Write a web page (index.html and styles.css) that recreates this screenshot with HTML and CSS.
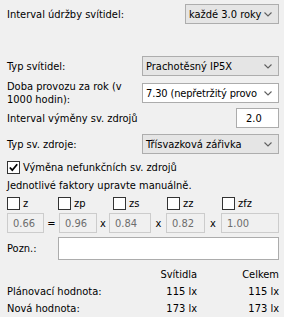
FILE: index.html
```html
<!DOCTYPE html>
<html lang="cs">
<head>
<meta charset="utf-8">
<link rel="stylesheet" href="styles.css">
</head>
<body>
<div class="panel">
  <div class="row r1">
    <span class="label">Interval údržby svítidel:</span>
    <div class="combo gray w-small"><span>každé 3.0 roky</span><svg class="chev" width="8" height="5" viewBox="0 0 8 5"><polyline points="0.5,0.5 4,4 7.5,0.5" fill="none" stroke="#606060" stroke-width="1.1"/></svg></div>
  </div>
  <div class="row r2">
    <span class="label">Typ svítidel:</span>
    <div class="combo gray w-big"><span>Prachotěsný IP5X</span><svg class="chev" width="8" height="5" viewBox="0 0 8 5"><polyline points="0.5,0.5 4,4 7.5,0.5" fill="none" stroke="#606060" stroke-width="1.1"/></svg></div>
  </div>
  <div class="row r3">
    <span class="label two">Doba provozu za rok (v<br>1000 hodin):</span>
    <div class="combo white w-big"><span class="clip">7.30 (nepřetržitý provo</span><svg class="chev" width="8" height="5" viewBox="0 0 8 5"><polyline points="0.5,0.5 4,4 7.5,0.5" fill="none" stroke="#606060" stroke-width="1.1"/></svg></div>
  </div>
  <div class="row r4">
    <span class="label">Interval výměny sv. zdrojů</span>
    <div class="field w-num">2.0</div>
  </div>
  <div class="row r5">
    <span class="label">Typ sv. zdroje:</span>
    <div class="combo gray w-big"><span>Třísvazková zářivka</span><svg class="chev" width="8" height="5" viewBox="0 0 8 5"><polyline points="0.5,0.5 4,4 7.5,0.5" fill="none" stroke="#606060" stroke-width="1.1"/></svg></div>
  </div>
  <div class="row r6">
    <span class="check"><svg width="11" height="11" viewBox="0 0 11 11"><polyline points="1.8,5.5 4.3,8.2 9.2,2.2" fill="none" stroke="#000" stroke-width="1.8"/></svg></span>
    <span class="check-label">Výměna nefunkčních sv. zdrojů</span>
  </div>
  <div class="row r7">
    <span class="label">Jednotlivé faktory upravte manuálně.</span>
  </div>
  <div class="row r8">
    <span class="cb c1"><span class="check"></span><span class="check-label">z</span></span>
    <span class="cb c2"><span class="check"></span><span class="check-label">zp</span></span>
    <span class="cb c3"><span class="check"></span><span class="check-label">zs</span></span>
    <span class="cb c4"><span class="check"></span><span class="check-label">zz</span></span>
    <span class="cb c5"><span class="check"></span><span class="check-label">zfz</span></span>
  </div>
  <div class="row r9">
    <div class="dis d1">0.66</div>
    <span class="op o1">=</span>
    <div class="dis d2">0.96</div>
    <span class="op o2">x</span>
    <div class="dis d3">0.84</div>
    <span class="op o3">x</span>
    <div class="dis d4">0.82</div>
    <span class="op o4">x</span>
    <div class="dis d5">1.00</div>
  </div>
  <div class="row r10">
    <span class="label pozn">Pozn.:</span>
    <div class="field note"></div>
  </div>
  <div class="table">
    <span></span><span class="num">Svítidla</span><span class="num">Celkem</span>
    <span>Plánovací hodnota:</span><span class="num">115 lx</span><span class="num">115 lx</span>
    <span>Nová hodnota:</span><span class="num">173 lx</span><span class="num">173 lx</span>
  </div>
</div>
</body>
</html>
```

FILE: styles.css
```css
html, body {
  margin: 0;
  padding: 0;
  background: #f0f0f0;
}
body {
  font-family: "DejaVu Sans Condensed", "DejaVu Sans", sans-serif;
  font-stretch: condensed;
  font-size: 11px;
  color: #000;
  width: 284px;
  height: 317px;
  overflow: hidden;
}
.panel {
  padding: 0 5px 0 7px;
}
.row {
  display: flex;
  align-items: center;
  justify-content: space-between;
  height: 20px;
}
.r1 { margin-top: 4px; }
.r2 { margin-top: 32px; }
.r3 { margin-top: 7px; }
.r4 { margin-top: 5px; }
.r5 { margin-top: 6px; }
.r6 { margin-top: 5px; height: 16px; justify-content: flex-start; }
.r7 { margin-top: 1px; height: 18px; }
.r8 { margin-top: 1px; height: 16px; justify-content: flex-start; }
.r9 { margin-top: 2px; justify-content: flex-start; }
.r10 { margin-top: 4px; height: 23px; }

.label { line-height: 13px; }

.combo {
  box-sizing: border-box;
  height: 20px;
  border: 1px solid #adadad;
  display: flex;
  align-items: center;
  justify-content: space-between;
  padding: 0 6px 0 3px;
  white-space: nowrap;
  overflow: hidden;
}
.combo.gray { background: #e5e5e5; }
.combo.white { background: #fff; border-color: #acacac; }
.clip { flex: 1; min-width: 0; overflow: hidden; letter-spacing: -0.15px; }
.w-small { width: 94px; }
.w-big { width: 137px; }
.chev { flex: none; margin-left: 3px; }

.field {
  box-sizing: border-box;
  height: 20px;
  background: #fff;
  border: 1px solid #acacac;
  display: flex;
  align-items: center;
  padding: 0 4px;
}
.w-num { width: 43px; padding-left: 9px; }
.note { width: 221px; height: 23px; }

.check {
  box-sizing: border-box;
  width: 13px;
  height: 13px;
  border: 1px solid #333;
  background: #fff;
  display: inline-flex;
  align-items: center;
  justify-content: center;
  flex: none;
}
.check-label { margin-left: 3px; }
.cb { display: inline-flex; align-items: center; }
.c1 { width: 51px; }
.c2 { width: 55px; }
.c3 { width: 54px; }
.c4 { width: 55px; }

.dis {
  box-sizing: border-box;
  height: 20px;
  border: 1px solid #cccccc;
  background: #f0f0f0;
  color: #6d6d6d;
  display: flex;
  align-items: center;
  padding: 0 5px;
}
.d1 { width: 37px; }
.d2 { width: 38px; }
.d3 { width: 42px; }
.d4 { width: 39px; }
.d5 { width: 58px; }
.op { text-align: center; }
.o1 { width: 15px; }
.o2 { width: 12px; }
.o3 { width: 15px; }
.o4 { width: 16px; }

.table {
  display: grid;
  grid-template-columns: 130px 60px 82px;
  margin-top: 8px;
  row-gap: 4px;
  line-height: 13px;
}
.num { text-align: right; }
```
